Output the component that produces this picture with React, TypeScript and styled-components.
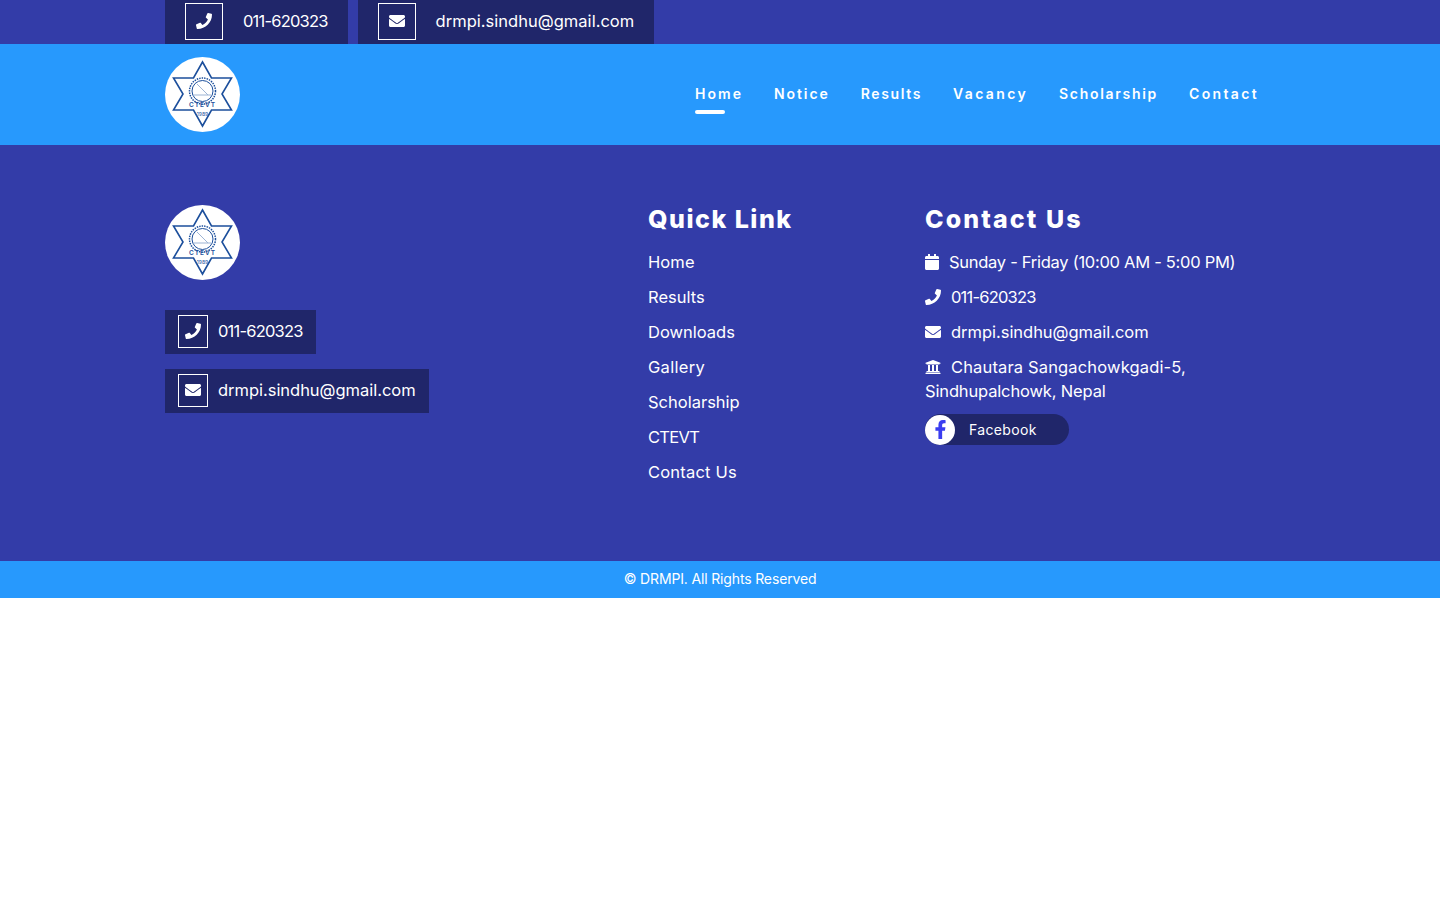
import React from 'react';
import styled, { createGlobalStyle } from 'styled-components';
import { FaCalendar, FaEnvelope, FaFacebookF, FaPhone, FaUniversity } from 'react-icons/fa';

const GlobalStyle = createGlobalStyle`
  body {
    margin: 0;
    background: #fff;
    font-family: Inter, 'Noto Sans', sans-serif;
    color: #fff;
  }
`;

const Container = styled.div`
  width: 1110px;
  margin: 0 auto;
`;

const Tracked = styled.span<{ $t: number }>`
  letter-spacing: ${({ $t }) => $t}px;
`;

const PillText = styled(Tracked)`
  margin-top: -2px;
`;

const TopBar = styled.div`
  background: #333ca8;
  height: 44px;
`;

const TopRow = styled(Container)`
  display: flex;
  gap: 10px;
`;

const TopPill = styled.a`
  display: flex;
  align-items: center;
  height: 44px;
  padding: 0 20px;
  gap: 20px;
  box-sizing: border-box;
  background: #20266a;
  font-size: 16.5px;
`;

const IconBox = styled.span<{ $size: number; $tall: number }>`
  display: flex;
  align-items: center;
  justify-content: center;
  align-self: flex-start;
  box-sizing: border-box;
  width: ${({ $size }) => $size}px;
  height: ${({ $tall }) => $tall}px;
  margin-top: ${({ $tall }) => ($tall === 37 ? 3 : 5)}px;
  padding-bottom: 1px;
  border: 1px solid #fff;
  font-size: 16px;
`;

const NavBar = styled.header`
  background: #2799fd;
  height: 101px;
`;

const NavRow = styled(Container)`
  display: flex;
  align-items: center;
  justify-content: space-between;
  height: 100%;
`;

const Menu = styled.nav`
  display: flex;
  gap: 31px;
  margin: 0 16px 2px 0;
`;

const MenuItem = styled.a<{ $active?: boolean; $t: number }>`
  position: relative;
  font-size: 14px;
  font-weight: 600;
  letter-spacing: ${({ $t }) => $t}px;

  &::after {
    content: '';
    display: ${({ $active }) => ($active ? 'block' : 'none')};
    position: absolute;
    left: 0;
    top: 25px;
    width: 30px;
    height: 4px;
    border-radius: 2px;
    background: #fff;
  }
`;

const Footer = styled.footer`
  background: #333ca8;
  height: 416px;
  box-sizing: border-box;
  padding-top: 60px;
`;

const FooterGrid = styled(Container)`
  display: grid;
  grid-template-columns: 483px 277px 1fr;
`;

const BrandColumn = styled.div`
  display: flex;
  flex-direction: column;
  align-items: flex-start;
`;

const FooterPill = styled.a<{ $top: number }>`
  display: flex;
  align-items: center;
  gap: 10px;
  height: 44px;
  padding: 0 13px;
  margin-top: ${({ $top }) => $top}px;
  background: #20266a;
  font-size: 16.5px;
`;

const Heading = styled.h4<{ $t: number }>`
  margin: 0 0 17px;
  font-size: 25px;
  line-height: 28px;
  font-weight: 800;
  letter-spacing: ${({ $t }) => $t}px;
`;

const LinkList = styled.ul`
  list-style: none;
  margin: 0;
  padding: 0;
  display: flex;
  flex-direction: column;
  gap: 11px;
`;

const LinkItem = styled.li<{ $t: number }>`
  font-size: 16.5px;
  line-height: 24px;
  letter-spacing: ${({ $t }) => $t}px;
`;

const ContactLine = styled.div`
  font-size: 16.5px;
  line-height: 24px;
  margin-bottom: 11px;

  svg {
    vertical-align: -2px;
    font-size: 16px;
    margin-right: 10px;
  }
`;

const CalendarIcon = styled(FaCalendar)`
  width: 14px;
`;

const SocialPill = styled.a`
  display: flex;
  align-items: center;
  width: 144px;
  height: 31px;
  border-radius: 16px;
  background: #20266a;
  font-size: 14px;
  letter-spacing: 0.35px;
  margin-top: 3px;
`;

const SocialIcon = styled.span`
  display: flex;
  align-items: center;
  justify-content: center;
  width: 30px;
  height: 30px;
  margin-right: 14px;
  border-radius: 50%;
  background: #fff;
  color: #3a3df0;
  font-size: 19px;
`;

const BottomBar = styled.div`
  background: #2799fd;
  height: 37px;
  box-sizing: border-box;
  padding-bottom: 2px;
  display: flex;
  align-items: center;
  justify-content: center;
  font-size: 14px;
  letter-spacing: -0.15px;
`;

const Logo = () => (
  <svg width="75" height="75" viewBox="0 0 75 75">
    <circle cx="37.5" cy="37.5" r="37.5" fill="#fff" />
    <g fill="none" stroke="#1c4f9c">
      <path
        d="M37.5 5 L46.5 21 L66.5 21 L57 37 L66.5 53 L46.5 53 L37.5 69 L28.5 53 L8.5 53 L18 37 L8.5 21 L28.5 21 Z"
        strokeWidth="1.6"
      />
      <circle cx="37.5" cy="34" r="13" strokeWidth="1.5" strokeDasharray="1.5 1" />
      <circle cx="37.5" cy="34" r="10.5" strokeWidth="1" />
      <path d="M32 27 L43 38 M28 38 L46 38" stroke="#9db4d4" strokeWidth="1" />
    </g>
    <text x="37.5" y="50" textAnchor="middle" fontSize="6.5" fontWeight="600" fill="#1c4f9c" fontFamily="Inter, sans-serif" letterSpacing="1">
      CTEVT
    </text>
    <text x="37.5" y="59" textAnchor="middle" fontSize="5" fill="#1c4f9c" fontFamily="Inter, sans-serif">
      1989
    </text>
  </svg>
);

const navItems = [
  { label: 'Home', t: 2.05 },
  { label: 'Notice', t: 1.9 },
  { label: 'Results', t: 1.65 },
  { label: 'Vacancy', t: 2.35 },
  { label: 'Scholarship', t: 1.7 },
  { label: 'Contact', t: 2.35 },
];
const quickLinks = [
  { label: 'Home', t: 0.1 },
  { label: 'Results', t: 0 },
  { label: 'Downloads', t: 0 },
  { label: 'Gallery', t: 0.3 },
  { label: 'Scholarship', t: 0 },
  { label: 'CTEVT', t: -0.7 },
  { label: 'Contact Us', t: 0.2 },
];

export default function App() {
  return (
    <>
      <GlobalStyle />
      <TopBar>
        <TopRow>
          <TopPill>
            <IconBox $size={38} $tall={37}>
              <FaPhone />
            </IconBox>
            <PillText $t={-0.8}>011-620323</PillText>
          </TopPill>
          <TopPill>
            <IconBox $size={38} $tall={37}>
              <FaEnvelope />
            </IconBox>
            <PillText $t={0.02}>drmpi.sindhu@gmail.com</PillText>
          </TopPill>
        </TopRow>
      </TopBar>
      <NavBar>
        <NavRow>
          <Logo />
          <Menu>
            {navItems.map((item, i) => (
              <MenuItem key={item.label} $active={i === 0} $t={item.t}>
                {item.label}
              </MenuItem>
            ))}
          </Menu>
        </NavRow>
      </NavBar>
      <Footer>
        <FooterGrid>
          <BrandColumn>
            <Logo />
            <FooterPill $top={30}>
              <IconBox $size={30} $tall={33}>
                <FaPhone />
              </IconBox>
              <PillText $t={-0.8}>011-620323</PillText>
            </FooterPill>
            <FooterPill $top={15}>
              <IconBox $size={30} $tall={33}>
                <FaEnvelope />
              </IconBox>
              <PillText $t={-0.03}>drmpi.sindhu@gmail.com</PillText>
            </FooterPill>
          </BrandColumn>
          <div>
            <Heading $t={1.5}>Quick Link</Heading>
            <LinkList>
              {quickLinks.map((link) => (
                <LinkItem key={link.label} $t={link.t}>
                  {link.label}
                </LinkItem>
              ))}
            </LinkList>
          </div>
          <div>
            <Heading $t={2.1}>Contact Us</Heading>
            <ContactLine>
              <CalendarIcon />
              <Tracked $t={-0.28}>Sunday - Friday (10:00 AM - 5:00 PM)</Tracked>
            </ContactLine>
            <ContactLine>
              <FaPhone />
              <Tracked $t={-0.8}>011-620323</Tracked>
            </ContactLine>
            <ContactLine>
              <FaEnvelope />
              <Tracked $t={-0.03}>drmpi.sindhu@gmail.com</Tracked>
            </ContactLine>
            <ContactLine>
              <FaUniversity />
              <Tracked $t={0.15}>Chautara Sangachowkgadi-5,</Tracked>
              <br />
              <Tracked $t={-0.15}>Sindhupalchowk, Nepal</Tracked>
            </ContactLine>
            <SocialPill>
              <SocialIcon>
                <FaFacebookF />
              </SocialIcon>
              Facebook
            </SocialPill>
          </div>
        </FooterGrid>
      </Footer>
      <BottomBar>© DRMPI. All Rights Reserved</BottomBar>
    </>
  );
}
